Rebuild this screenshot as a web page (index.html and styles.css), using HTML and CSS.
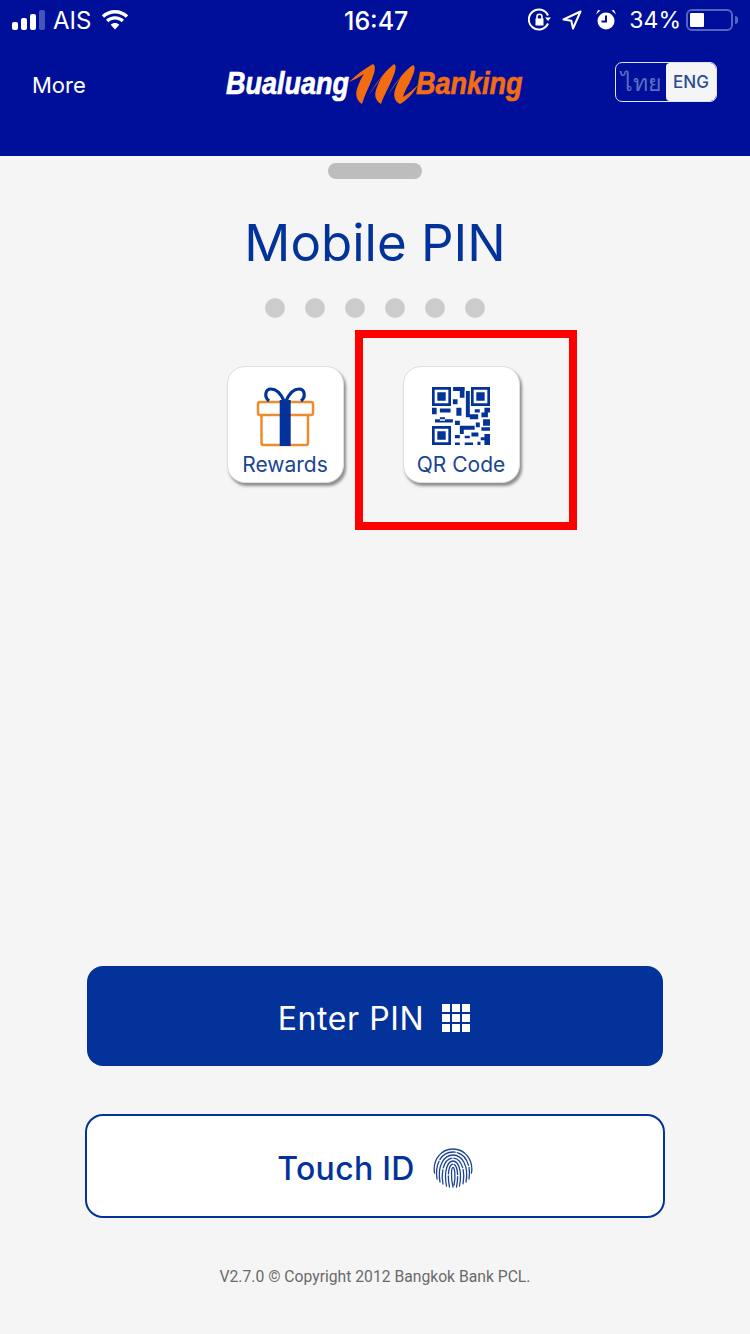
FILE: index.html
```html
<!DOCTYPE html>
<html>
<head>
  <title>Mobile PIN</title>
  <link rel="stylesheet" href="styles.css">
</head>
<body>
  <header class="header">
    <div class="status">
      <div class="status-left">
        <div class="signal"><i class="b1"></i><i class="b2"></i><i class="b3"></i><i class="b4"></i></div>
        <span class="carrier">AIS</span>
        <svg class="wifi" width="30" height="22" viewBox="0 0 30 22"><path fill="#fff" d="M15 4.500c4.200 0 8 1.600 10.900 4.300l2.300-2.500C24.700 3 20 1 15 1S5.300 3 1.800 6.300l2.300 2.500C7 6.100 10.800 4.500 15 4.500zM15 10.600c2.500 0 4.900 1 6.700 2.600l2.300-2.500c-2.400-2.200-5.600-3.500-9-3.500s-6.600 1.300-9 3.500l2.300 2.500c1.800-1.600 4.200-2.600 6.700-2.600zM15 14c-1.600 0-3.100.6-4.300 1.700L15 20.500l4.300-4.800C18.100 14.600 16.600 14 15 14z"/></svg>
      </div>
      <span class="clock">16:47</span>
      <div class="status-right">
        <svg class="st-lock" width="24" height="24" viewBox="0 0 24 24"><path fill="none" stroke="#fff" stroke-width="2" d="M20 15.500A10 10 0 1 1 20 7.500"/><path fill="#fff" d="M17 9.500h6l-3 3.500zM7.500 10.500h8v7h-8z"/><path fill="none" stroke="#fff" stroke-width="1.600" d="M9 11V8.800a2.500 2.500 0 0 1 5 0V11"/></svg>
        <svg class="st-loc" width="20" height="20" viewBox="0 0 20 20"><path fill="none" stroke="#fff" stroke-width="2" stroke-linejoin="round" d="M18.500 1.500L1.500 9.500l7.800 1.200 1.700 7.800z"/></svg>
        <svg class="st-alarm" width="22" height="22" viewBox="0 0 22 22"><circle cx="11" cy="12" r="8.500" fill="#fff"/><path fill="none" stroke="#000f9a" stroke-width="2" d="M11 6.500V12.500H6.500"/><path fill="#fff" d="M1 5.500L5.500 1.500 3 1zM21 5.500L16.500 1.500 19 1z"/></svg>
        <span class="percent">34%</span>
        <div class="battery"><div class="battery-fill"></div></div>
        <div class="battery-nub"></div>
      </div>
    </div>
    <div class="nav">
      <span class="more">More</span>
      <div class="logo">
        <span class="logo-word logo-white">Bualuang</span>
        <svg class="logo-mark" width="70" height="42" viewBox="0 0 70 42"><path fill="#f26c12" d="M0 19C7 12 15 6 24 1C28 3 25 12 21 21C18 28 15 34 13 41C8 38 6 32 8 26C10 20 12 15 15 11C10 14 5 17 0 19ZM20 32C27 20 35 9 45 1C49 3 45 12 41 21C38 28 34 34 32 41C27 38 25 33 27 27C29 21 31 16 35 11C30 17 25 25 20 32ZM39 32C46 20 54 9 64 2C68 4 64 12 60 21C57 26 55 30 54 34C59 31 64 27 69 22C64 31 57 38 51 41C46 39 44 33 46 27C48 21 50 16 54 11C49 17 44 25 39 32Z"/></svg>
        <span class="logo-word logo-orange">Banking</span>
      </div>
      <div class="lang">
        <span class="lang-th">ไทย</span>
        <span class="lang-en">ENG</span>
      </div>
    </div>
  </header>

  <main class="main">
    <div class="handle"></div>
    <h1 class="title">Mobile PIN</h1>
    <div class="dots">
      <span></span><span></span><span></span><span></span><span></span><span></span>
    </div>

    <div class="tiles">
      <div class="tile">
        <svg width="60" height="60" viewBox="0 0 60 60"><g fill="none" stroke="#f08a2e" stroke-width="2.500" stroke-linejoin="round"><rect x="3" y="15" width="55" height="13" rx="2"/><path d="M6.500 28V56a2 2 0 0 0 2 2H51a2 2 0 0 0 2-2V28"/></g><g fill="none" stroke="#033399" stroke-width="3.200"><path d="M29 14C26 7 21 2 16 2C10 2 9 10 14 14"/><path d="M31 14C34 7 39 2 44 2C50 2 51 10 46 14"/></g><rect x="24.700" y="13" width="11" height="46" fill="#033399"/></svg>
        <span class="tile-label">Rewards</span>
      </div>
      <div class="tile">
        <svg width="58" height="58" viewBox="0 0 25 25"><path fill="#033399" fill-rule="evenodd" d="M0 0h8.200v8.200H0zM1.150 1.150v5.900h5.900V1.150zM2.300 2.300h3.600v3.600H2.300zM16.800 0H25v8.200h-8.200zM17.950 1.150v5.900h5.900V1.150zM19.100 2.300h3.600v3.600h-3.600zM0 16.800h8.200V25H0zM1.150 17.950v5.900h5.900v-5.900zM2.300 19.100h3.600v3.600H2.300zM9.100 0h5v1.700h-5zM12 1.700h2v2.900h-2zM9 5.300h2v2.100H9zM14.600 1.700h1.700V13h-1.700zM10.500 8.900h2.200v3.500h-2.200zM0 8.900h2v2.800H0zM3.400 9.300H8V11H3.400zM3.400 13h2.200v1.600H3.400zM1.300 13.900H9v1.400H1.300zM18.400 9.600h2.200V11h-2.200zM22.600 8.900H25V11h-2.400zM16.300 11.700h3.600v2.200h-3.600zM21.300 11h2.800v2h-2.800zM22 13.900h3v2.800h-3zM9.900 14.600H12v1.800H9.900zM12 16.700h6.400v1.700H12zM18.900 15.300h1.700v2.100h-1.700zM21.300 17.400H25v1.500h-3.700zM12 18.400h1.700v1.900H12zM17 19.600h3v1.700h-3zM9.900 20.700H12v1.400H9.900zM14.100 21h2.200v1.100h-2.200zM22.600 20.300H25V25h-2.400zM9.900 23.900H12V25H9.900zM14.100 23.900h3.600V25h-3.600zM19.600 23.600h1.300V25h-1.300zM21 21.700h1.600V23H21z"/></svg>
        <span class="tile-label">QR Code</span>
      </div>
    </div>

    <div class="btn btn-fill">
      <span>Enter PIN</span>
      <div class="keypad"><i></i><i></i><i></i><i></i><i></i><i></i><i></i><i></i><i></i></div>
    </div>
    <div class="btn btn-line">
      <span>Touch ID</span>
      <svg width="40" height="40" viewBox="0 0 40 40"><g fill="none" stroke="#1a4494" stroke-width="1.300" stroke-linecap="round"><path d="M1.500 25C-.5 12 8 1 20 1C32 1 40.500 12 38.500 25"/><path d="M4 31C1.500 15 9 4 20 4C31 4 38.500 15 36 31" stroke-dasharray="18 2"/><path d="M7 34C4 18 11 7 20 7C29 7 36 18 33 34"/><path d="M10 36C7 20 13 10 20 10C27 10 33 20 30 36" stroke-dasharray="14 2"/><path d="M13.500 38C10.500 22 15 13 20 13C25 13 29.500 22 26.500 38"/><path d="M16.500 39C13.500 24 17 16 20 16C23 16 26.500 24 23.500 39" stroke-dasharray="11 2"/><path d="M20 39C17.500 28 18.500 19.500 20 19.500C21.500 19.500 23 28 21 37"/></g></svg>
    </div>
    <p class="copyright">V2.7.0 © Copyright 2012 Bangkok Bank PCL.</p>
  </main>

  <div class="highlight"></div>
</body>
</html>
```

FILE: styles.css
```css
* {
  box-sizing: border-box;
}

body {
  font-family: Inter, "Noto Sans", sans-serif;
  margin: 0;
  width: 750px;
  height: 1334px;
  overflow: hidden;
  background: #f5f5f5;
  position: relative;
}

.header {
  height: 156px;
  background: #000f9a;
  color: #fff;
}

.status {
  height: 40px;
  padding: 0 12px;
  display: flex;
  justify-content: space-between;
  align-items: center;
  position: relative;
}

.status-left,
.status-right {
  display: flex;
  align-items: center;
}

.signal {
  display: flex;
  align-items: flex-end;
  gap: 3px;
  height: 20px;
  margin-right: 8px;
}

.signal i {
  width: 6px;
  background: #fff;
  border-radius: 2px;
}

.signal .b1 { height: 8px; }
.signal .b2 { height: 12px; }
.signal .b3 { height: 16px; }
.signal .b4 { height: 20px; background: #4356bb; }

.carrier {
  font-size: 24px;
  width: 36px;
}

.wifi {
  margin-left: 11px;
}

.clock {
  font-size: 25px;
  font-weight: 500;
  position: absolute;
  left: 344px;
  top: 6px;
}

.st-lock {
  margin-right: 10px;
}

.st-loc {
  margin-right: 13px;
}

.st-alarm {
  margin-right: 12px;
}

.percent {
  font-size: 23px;
  margin-right: 5px;
}

.battery {
  width: 47px;
  height: 22px;
  border: 2px solid #5665c4;
  border-radius: 6px;
  padding: 2px;
}

.battery-fill {
  width: 14px;
  height: 14px;
  background: #fff;
  border-radius: 1px;
}

.battery-nub {
  width: 3px;
  height: 8px;
  margin-left: 2px;
  background: #5665c4;
  border-radius: 0 3px 3px 0;
}

.nav {
  height: 84px;
  padding: 0 33px 0 32px;
  display: flex;
  align-items: center;
  justify-content: space-between;
}

.more {
  font-size: 22px;
  margin-top: 6px;
}

.logo {
  display: flex;
  align-items: center;
  margin-top: 4px;
  margin-left: 48px;
}

.logo-word {
  font-family: "Liberation Sans", sans-serif;
  font-size: 31px;
  font-weight: bold;
  font-style: italic;
  display: block;
  white-space: nowrap;
  transform-origin: left center;
  -webkit-text-stroke: .7px currentColor;
}

.logo-white {
  width: 126px;
  color: #fff;
  transform: scaleX(.87);
}

.logo-orange {
  width: 107px;
  color: #f26c12;
  transform: scaleX(.87);
}

.logo-mark {
  margin: 0 -3px;
}

.lang {
  width: 102px;
  height: 40px;
  display: flex;
  border: 1px solid #dfe3f5;
  border-radius: 7px;
  overflow: hidden;
}

.lang-th {
  width: 50px;
  text-align: center;
  font-family: "Noto Sans", "DejaVu Sans", sans-serif;
  font-size: 23px;
  line-height: 38px;
  color: #5b70c0;
}

.lang-en {
  flex: 1;
  background: #f5f5f5;
  border-radius: 4px 0 0 4px;
  text-align: center;
  font-size: 17px;
  font-weight: 500;
  line-height: 38px;
  color: #2b4a9a;
}

.main {
  display: flex;
  flex-direction: column;
  align-items: center;
}

.handle {
  width: 94px;
  height: 16px;
  margin-top: 7px;
  border-radius: 8px;
  background: #bdbdbd;
}

.title {
  margin: 32px 0 0;
  font-size: 51px;
  font-weight: 400;
  line-height: 64px;
  color: #03339a;
}

.dots {
  display: flex;
  gap: 20px;
  margin-top: 23px;
}

.dots span {
  width: 20px;
  height: 20px;
  border-radius: 50%;
  background: #cccccc;
}

.tiles {
  display: flex;
  gap: 59px;
  margin: 48px 0 0 -4px;
}

.tile {
  width: 117px;
  height: 117px;
  padding: 20px 0 4px;
  background: #fff;
  border: 1px solid #dedede;
  border-radius: 18px;
  box-shadow: 2px 3px 3px #8d8d8d;
  display: flex;
  flex-direction: column;
  align-items: center;
}

.tile svg {
  flex: none;
}

.tile-label {
  font-size: 21px;
  line-height: 26px;
  color: #1a4494;
  margin-top: auto;
  white-space: nowrap;
}

.btn {
  display: flex;
  justify-content: center;
  align-items: center;
  font-size: 32px;
  padding-top: 4px;
}

.btn-fill {
  width: 576px;
  height: 100px;
  margin-top: 483px;
  padding-right: 2px;
  gap: 18px;
  background: #03339a;
  color: #fff;
  letter-spacing: .6px;
  border-radius: 16px;
}

.btn-line {
  width: 580px;
  height: 104px;
  margin-top: 48px;
  gap: 18px;
  background: #fff;
  color: #03339a;
  font-weight: 500;
  letter-spacing: .3px;
  border: 2px solid #03339a;
  border-radius: 18px;
}

.keypad {
  display: grid;
  grid-template-columns: repeat(3, 8px);
  grid-auto-rows: 8px;
  gap: 2px;
}

.keypad i {
  background: #fff;
}

.copyright {
  margin: 49px 0 0;
  font-family: Roboto, sans-serif;
  font-size: 15.7px;
  line-height: 20px;
  color: #6a6a6a;
}

.highlight {
  position: absolute;
  left: 355px;
  top: 330px;
  width: 222px;
  height: 200px;
  border: 8px solid #ff0000;
}
```
